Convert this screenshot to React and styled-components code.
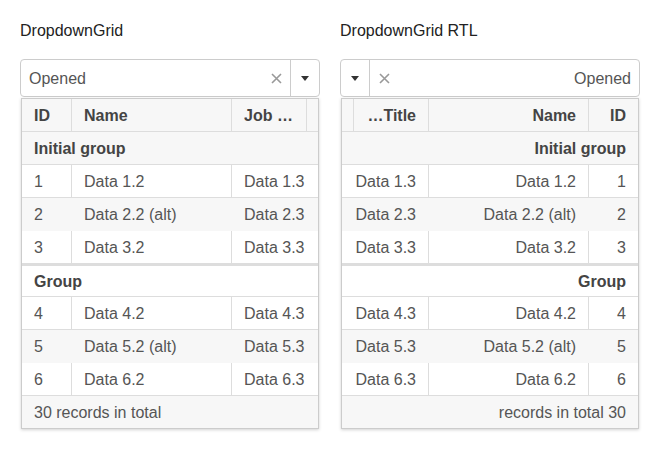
import styled, { createGlobalStyle } from 'styled-components';

const GlobalStyle = createGlobalStyle`
  body {
    margin: 0;
    background: #fff;
    font-family: 'Liberation Sans', Arial, sans-serif;
  }
`;

const Page = styled.div`
  display: flex;
  gap: 20px;
  padding: 22px 20px;
`;

const Panel = styled.div`
  width: 300px;
  display: flex;
  flex-direction: column;
`;

const Title = styled.div`
  font-size: 16px;
  line-height: 18px;
  color: #222;
  text-align: left;
  margin-bottom: 19px;
`;

const Combo = styled.div`
  display: flex;
  align-items: stretch;
  height: 38px;
  box-sizing: border-box;
  border: 1px solid #ccc;
  border-radius: 4px;
  background: #fff;
`;

const ComboText = styled.div`
  flex: 1;
  display: flex;
  align-items: center;
  padding-inline-start: 8px;
  padding-top: 1px;
  font-size: 16px;
  color: #555;
`;

const Clear = styled.div`
  width: 28px;
  display: flex;
  align-items: center;
  justify-content: center;
`;

const Toggle = styled.div`
  width: 28px;
  border-inline-start: 1px solid #ccc;
  display: flex;
  align-items: center;
  justify-content: center;
`;

const Popup = styled.div`
  margin: 1px 1px 0;
  border: 1px solid #ccc;
  box-shadow: 0 1px 3px rgba(0, 0, 0, 0.18);
  background: #fff;
`;

const Row = styled.div`
  display: grid;
  grid-template-columns: ${(p) => p.$cols};
  height: 33px;
  box-sizing: border-box;
  border-bottom: 1px solid ${(p) => (p.$alt ? '#f7f7f7' : '#ddd')};
  border-top: ${(p) => (p.$split ? '2px solid #ddd' : '0')};
  background: ${(p) => (p.$shade ? '#f7f7f7' : '#fff')};
  font-weight: ${(p) => (p.$bold ? 700 : 400)};
  color: ${(p) => (p.$bold ? '#444' : '#555')};
`;

const Cell = styled.div`
  display: flex;
  align-items: center;
  min-width: 0;
  padding: 2px 12px 0;
  font-size: 16px;
  white-space: nowrap;
  border-inline-end: 1px solid ${(p) => (p.$line ? '#ddd' : 'transparent')};

  span {
    overflow: hidden;
    text-overflow: ellipsis;
  }
`;

const Footer = styled.div`
  height: 32px;
  box-sizing: border-box;
  display: flex;
  align-items: center;
  padding: 2px 12px 0;
  background: #f7f7f7;
  font-size: 16px;
  color: #555;
`;

const HEAD_COLS = '50px 160px 75px 1fr';
const DATA_COLS = '50px 160px 1fr';

const groups = [
  {
    name: 'Initial group',
    shade: true,
    rows: [
      ['1', 'Data 1.2', 'Data 1.3'],
      ['2', 'Data 2.2 (alt)', 'Data 2.3', true],
      ['3', 'Data 3.2', 'Data 3.3'],
    ],
  },
  {
    name: 'Group',
    shade: false,
    rows: [
      ['4', 'Data 4.2', 'Data 4.3'],
      ['5', 'Data 5.2 (alt)', 'Data 5.3', true],
      ['6', 'Data 6.2', 'Data 6.3'],
    ],
  },
];

const ClearIcon = () => (
  <svg width="11" height="11" viewBox="0 0 11 11">
    <path d="M1 1L10 10M10 1L1 10" stroke="#999" strokeWidth="1.6" />
  </svg>
);

const ArrowIcon = () => (
  <svg width="8" height="5" viewBox="0 0 8 5">
    <path d="M0 0H8L4 5Z" fill="#333" />
  </svg>
);

function DropdownGrid({ title, rtl }) {
  return (
    <Panel dir={rtl ? 'rtl' : 'ltr'}>
      <Title dir="ltr">{title}</Title>
      <Combo>
        <ComboText>Opened</ComboText>
        <Clear>
          <ClearIcon />
        </Clear>
        <Toggle>
          <ArrowIcon />
        </Toggle>
      </Combo>
      <Popup>
        <Row $cols={HEAD_COLS} $shade $bold>
          <Cell $line><span>ID</span></Cell>
          <Cell $line><span>Name</span></Cell>
          <Cell $line><span>Job Title</span></Cell>
          <div />
        </Row>
        {groups.map((g, gi) => (
          <div key={g.name}>
            <Row $cols="1fr" $shade={g.shade} $bold $split={gi > 0}>
              <Cell>{g.name}</Cell>
            </Row>
            {g.rows.map(([id, name, job, alt]) => (
              <Row key={id} $cols={DATA_COLS} $shade={alt} $alt={alt}>
                <Cell $line={!alt}>{id}</Cell>
                <Cell $line={!alt}>{name}</Cell>
                <Cell>{job}</Cell>
              </Row>
            ))}
          </div>
        ))}
        <Footer>30 records in total</Footer>
      </Popup>
    </Panel>
  );
}

export default function App() {
  return (
    <>
      <GlobalStyle />
      <Page>
        <DropdownGrid title="DropdownGrid" />
        <DropdownGrid title="DropdownGrid RTL" rtl />
      </Page>
    </>
  );
}
